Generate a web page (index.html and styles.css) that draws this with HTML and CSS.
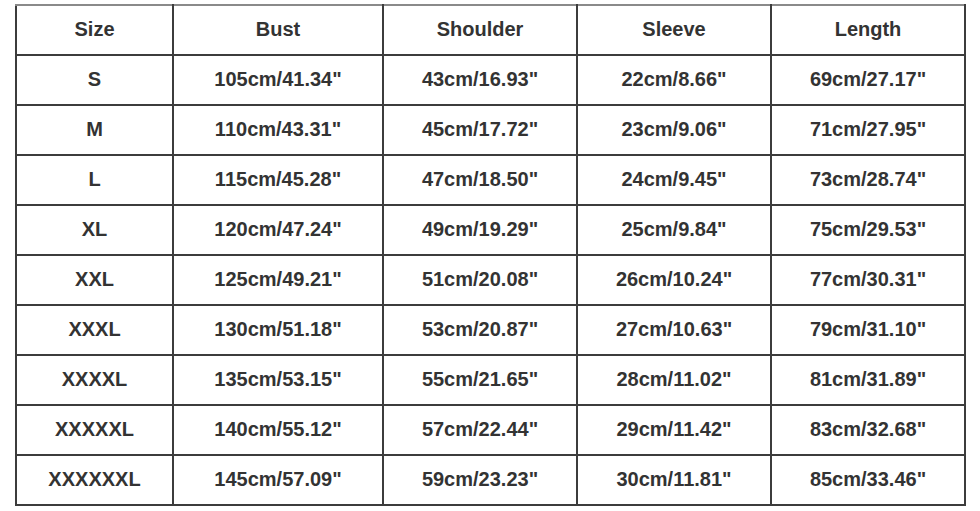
FILE: index.html
```html
<!DOCTYPE html>
<html>
<head>
<meta charset="utf-8">
<link rel="stylesheet" href="styles.css">
</head>
<body>
<table class="size-table">
  <colgroup>
    <col class="c-size"><col class="c-bust"><col class="c-mid"><col class="c-mid"><col class="c-mid">
  </colgroup>
  <tr><td>Size</td><td>Bust</td><td>Shoulder</td><td>Sleeve</td><td>Length</td></tr>
  <tr><td>S</td><td>105cm/41.34"</td><td>43cm/16.93"</td><td>22cm/8.66"</td><td>69cm/27.17"</td></tr>
  <tr><td>M</td><td>110cm/43.31"</td><td>45cm/17.72"</td><td>23cm/9.06"</td><td>71cm/27.95"</td></tr>
  <tr><td>L</td><td>115cm/45.28"</td><td>47cm/18.50"</td><td>24cm/9.45"</td><td>73cm/28.74"</td></tr>
  <tr><td>XL</td><td>120cm/47.24"</td><td>49cm/19.29"</td><td>25cm/9.84"</td><td>75cm/29.53"</td></tr>
  <tr><td>XXL</td><td>125cm/49.21"</td><td>51cm/20.08"</td><td>26cm/10.24"</td><td>77cm/30.31"</td></tr>
  <tr><td>XXXL</td><td>130cm/51.18"</td><td>53cm/20.87"</td><td>27cm/10.63"</td><td>79cm/31.10"</td></tr>
  <tr><td>XXXXL</td><td>135cm/53.15"</td><td>55cm/21.65"</td><td>28cm/11.02"</td><td>81cm/31.89"</td></tr>
  <tr><td>XXXXXL</td><td>140cm/55.12"</td><td>57cm/22.44"</td><td>29cm/11.42"</td><td>83cm/32.68"</td></tr>
  <tr><td>XXXXXXL</td><td>145cm/57.09"</td><td>59cm/23.23"</td><td>30cm/11.81"</td><td>85cm/33.46"</td></tr>
</table>
</body>
</html>
```
FILE: styles.css
```css
html, body {
  margin: 0;
  padding: 0;
  background: #fff;
}
body {
  padding: 4px 0 0 15px;
}
.size-table {
  border-collapse: collapse;
  table-layout: fixed;
  width: 950px;
  font-family: "Liberation Sans", Arial, sans-serif;
  font-weight: bold;
  font-size: 20px;
  color: #333;
}
.c-size { width: 157px; }
.c-bust { width: 210px; }
.c-mid { width: 194px; }
.size-table td {
  border: 2px solid #3c3c3c;
  height: 46px;
  padding: 0 0 2px 0;
  text-align: center;
  vertical-align: middle;
}
.size-table tr:first-child td {
  border-top-color: #8a8a8a;
}
```
